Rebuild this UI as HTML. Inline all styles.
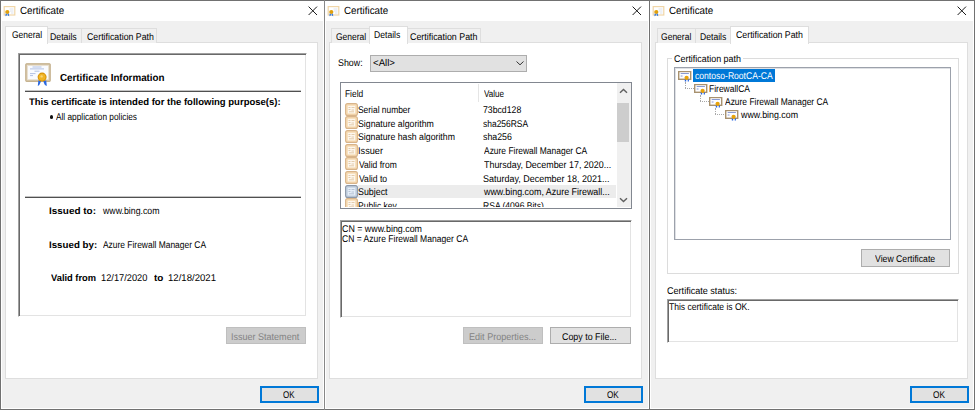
<!DOCTYPE html>
<html><head><meta charset="utf-8">
<style>
*{margin:0;padding:0;box-sizing:border-box}
html,body{width:975px;height:410px;overflow:hidden;background:#f0f0f0}
body{position:relative;font-family:"Liberation Sans",sans-serif;font-size:9.8px;color:#000;letter-spacing:-0.4px;text-rendering:geometricPrecision}
.a{position:absolute}
.t{position:absolute;white-space:nowrap;line-height:10px;z-index:5}
.b{font-weight:bold;letter-spacing:0;font-size:9.5px}
.dis{color:#838383}
.dlg{position:absolute;top:0;width:326px;height:410px;border:1px solid #717171;background:#f0f0f0}
.hl{position:absolute;left:0;top:0;width:324px;height:408px;border-left:1px solid #fff;border-right:1px solid #fff;border-bottom:1px solid #fff}
.title{position:absolute;left:0;top:0;width:324px;height:20px;background:#fff}
.x{position:absolute;left:306px;top:4px;width:11px;height:11px}
.ticon{position:absolute;left:2px;top:5px;width:14px;height:12px}
.tab{position:absolute;background:#f0f0f0;border:1px solid #dedede;border-bottom:none}
.tabsel{position:absolute;background:#fff;border:1px solid #dedede;border-bottom:none;z-index:2}
.panel{position:absolute;background:#fff;border:1px solid #dedede}
.btn{position:absolute;background:#e1e1e1;border:1px solid #adadad}
.btnd{position:absolute;background:#cccccc;border:1px solid #bfbfbf}
.ok{position:absolute;background:#e1e1e1;border:2px solid #0078d7}
.sunk{position:absolute;background:#fff;border-top:1px solid #a0a0a0;border-left:1px solid #a0a0a0;border-right:1px solid #fff;border-bottom:1px solid #fff;box-shadow:inset 1px 1px 0 #696969,inset -1px -1px 0 #e3e3e3}
.tv{position:absolute;background:#fff;border:1px solid #9ca1ab;box-shadow:inset 1px 1px 0 #dfe1e5}
.lv{position:absolute;background:#fff;border:1px solid #828790}
.grp{position:absolute;border:1px solid #dcdcdc}
</style></head><body>
<svg width="0" height="0" style="position:absolute">
<defs>
<g id="ticon">
  <rect x="1.2" y="0.6" width="10.6" height="8.4" fill="#fff" stroke="#f0d6a8" stroke-width="1.2"/>
  <path d="M6.5 3h4M7 5h3.5M8 7h2.5" stroke="#d5dbe6" stroke-width="0.8"/>
  <circle cx="4.3" cy="6" r="2.1" fill="#e0a00c"/>
  <path d="M2.6 7.6 L2.4 10.3 L3.9 9.6 L4.1 8.1Z M4.5 8.1 L4.7 9.6 L6.2 10.3 L6 7.6Z" fill="#3b7de0"/>
</g>
<g id="xicon">
  <path d="M1.6 1.6L10 10M10 1.6L1.6 10" stroke="#1a1a1a" stroke-width="1"/>
</g>
<g id="bigcert">
  <rect x="0.3" y="0.3" width="25.4" height="18.6" rx="1.2" fill="#d6c7aa"/>
  <rect x="0.8" y="0.8" width="24.4" height="17.6" rx="1" fill="none" stroke="#c2ae8a" stroke-width="0.9"/>
  <rect x="2.6" y="2.6" width="20.8" height="14" fill="#f9fbff" stroke="#ece3d3" stroke-width="0.7"/>
  <path d="M7.5 4h9M5 5.9h14M9.5 8.2h5M5 10.6h5.5M5 12.6h3" stroke="#9fb3dc" stroke-width="0.8"/>
  <path d="M13.4 17.3 L12.8 23 L14.3 22 L16.1 18.3Z M18.2 18.3 L19.9 22 L21.8 23 L21.2 17.3Z" fill="#2a68e0"/>
  <circle cx="17.1" cy="14.1" r="4.5" fill="#d9940a"/>
  <circle cx="17.1" cy="14.1" r="3.4" fill="#f0b526"/>
  <circle cx="16.6" cy="13.4" r="1.2" fill="#f8d57a"/>
</g>
<g id="fieldicon">
  <rect x="0.6" y="0.6" width="11.8" height="11.8" rx="2" fill="#f7dbb3" stroke="#d8b48a" stroke-width="1.1"/>
  <rect x="2.8" y="2.8" width="7.4" height="7.6" fill="#fdf7ee"/>
  <path d="M3.5 4.5h2M6.5 4.5h3M3.5 6.5h2M6.5 7h2.5M4 8.8h5" stroke="#dcc09a" stroke-width="0.8"/>
</g>
<g id="fieldicon2">
  <rect x="0.6" y="0.6" width="11.8" height="11.8" rx="2" fill="#c5d2e2" stroke="#8d98a8" stroke-width="1.1"/>
  <rect x="2.8" y="2.8" width="7.4" height="7.6" fill="#e6eef8"/>
  <path d="M3.5 4.5h2M6.5 4.5h3M3.5 6.5h2M6.5 7h2.5M4 8.8h5" stroke="#a9b8cc" stroke-width="0.8"/>
</g>
<g id="treecert">
  <rect x="0.7" y="0.5" width="12" height="7.8" fill="#fdfdff" stroke="#a8916e" stroke-width="1.4"/>
  <path d="M2.7 2.5h8.2M2.7 5h1.8" stroke="#6b82c8" stroke-width="0.8"/>
  <path d="M6.8 8.3 L6.8 10.6 L8.2 10.6 L8.2 8.6Z M9.7 8.6 L9.7 10.6 L10.9 10.6 L10.9 8.3Z" fill="#2563e0"/>
  <circle cx="8.6" cy="6.8" r="2.1" fill="#e8a30a"/>
</g>
</defs>
</svg>
<div class="dlg" style="left:0px;width:325px">
  <div class="hl" style="width:323px"></div>
  <div class="title" style="width:323px"></div>
  <svg class="ticon" viewBox="0 0 14 12"><use href="#ticon"/></svg>
  <svg class="x" viewBox="0 0 11 11"><use href="#xicon"/></svg>
</div>
<div class="t" style="left:19.67px;top:6.0px;font-size:10.5px;letter-spacing:0.000px;transform:scaleX(0.9348);transform-origin:0 0;">Certificate</div>
<div class="dlg" style="left:324px;width:326px">
  <div class="hl" style="width:324px"></div>
  <div class="title" style="width:324px"></div>
  <svg class="ticon" viewBox="0 0 14 12"><use href="#ticon"/></svg>
  <svg class="x" viewBox="0 0 11 11"><use href="#xicon"/></svg>
</div>
<div class="t" style="left:343.67px;top:6.0px;font-size:10.5px;letter-spacing:0.000px;transform:scaleX(0.9348);transform-origin:0 0;">Certificate</div>
<div class="dlg" style="left:649px;width:326px">
  <div class="hl" style="width:324px"></div>
  <div class="title" style="width:324px"></div>
  <svg class="ticon" viewBox="0 0 14 12"><use href="#ticon"/></svg>
  <svg class="x" viewBox="0 0 11 11"><use href="#xicon"/></svg>
</div>
<div class="t" style="left:668.67px;top:6.0px;font-size:10.5px;letter-spacing:0.000px;transform:scaleX(0.9348);transform-origin:0 0;">Certificate</div>
<div class="panel" style="left:5px;top:42px;width:313px;height:337px;"></div>
<div class="tabsel" style="left:5px;top:26px;width:43px;height:18px;"></div>
<div class="tab" style="left:47px;top:28px;width:35px;height:15px;"></div>
<div class="tab" style="left:81px;top:28px;width:76px;height:15px;"></div>
<div class="t" style="left:11.90px;top:31.1px;letter-spacing:0.000px;transform:scaleX(0.8618);transform-origin:0 0;">General</div>
<div class="t" style="left:50.11px;top:32.8px;letter-spacing:0.000px;transform:scaleX(0.8931);transform-origin:0 0;">Details</div>
<div class="t" style="left:86.60px;top:32.8px;letter-spacing:0.000px;transform:scaleX(0.8973);transform-origin:0 0;">Certification Path</div>
<div class="sunk" style="left:18px;top:53px;width:289px;height:264px;"></div>
<svg class="a" style="left:25px;top:63px;width:26px;height:24px;z-index:5" viewBox="0 0 26 24"><use href="#bigcert"/></svg>
<div class="t b" style="left:59.90px;top:73.8px;font-size:10.2px;letter-spacing:0.000px;transform:scaleX(0.9620);transform-origin:0 0;">Certificate Information</div>
<div class="a" style="left:25px;top:91px;width:276px;height:1px;background:#505050;box-shadow:0 -1px 0 #c4c4c4;z-index:5"></div>
<div class="t b" style="left:28.60px;top:98.4px;letter-spacing:0.000px;transform:scaleX(1.0016);transform-origin:0 0;">This certificate is intended for the following purpose(s):</div>
<div class="a" style="left:50.3px;top:115.4px;width:3.2px;height:3.2px;border-radius:50%;background:#111;z-index:5"></div>
<div class="t" style="left:56.40px;top:112.5px;letter-spacing:0.000px;transform:scaleX(0.8448);transform-origin:0 0;">All application policies</div>
<div class="a" style="left:25px;top:197px;width:276px;height:1px;background:#505050;box-shadow:0 -1px 0 #c4c4c4;z-index:5"></div>
<div class="t b" style="left:49.25px;top:207.1px;letter-spacing:0.000px;transform:scaleX(1.0465);transform-origin:0 0;">Issued to:</div>
<div class="t" style="left:103.30px;top:207.1px;letter-spacing:0.000px;transform:scaleX(0.8952);transform-origin:0 0;">www.bing.com</div>
<div class="t b" style="left:49.08px;top:240.9px;letter-spacing:0.000px;transform:scaleX(1.0244);transform-origin:0 0;">Issued by:</div>
<div class="t" style="left:103.30px;top:240.9px;letter-spacing:0.000px;transform:scaleX(0.8600);transform-origin:0 0;">Azure Firewall Manager CA</div>
<div class="t b" style="left:50.50px;top:274.4px;letter-spacing:0.000px;transform:scaleX(0.9804);transform-origin:0 0;">Valid from</div>
<div class="t" style="left:101.45px;top:274.4px;letter-spacing:0.000px;transform:scaleX(0.9458);transform-origin:0 0;">12/17/2020</div>
<div class="t b" style="left:153.60px;top:274.4px;letter-spacing:0.000px;transform:scaleX(1.0444);transform-origin:0 0;">to</div>
<div class="t" style="left:168.02px;top:274.4px;letter-spacing:0.000px;transform:scaleX(0.9787);transform-origin:0 0;">12/18/2021</div>
<div class="btnd" style="left:226px;top:327px;width:80px;height:17px;"></div>
<div class="t dis" style="left:230.88px;top:333.0px;letter-spacing:0.000px;transform:scaleX(0.9205);transform-origin:0 0;">Issuer Statement</div>
<div class="ok" style="left:260px;top:386px;width:59px;height:17px;"></div>
<div class="t" style="left:283.30px;top:390.6px;letter-spacing:0.000px;transform:scaleX(0.8143);transform-origin:0 0;">OK</div>
<div class="panel" style="left:329px;top:42px;width:313px;height:337px;"></div>
<div class="tab" style="left:331px;top:28px;width:39px;height:15px;"></div>
<div class="tabsel" style="left:369px;top:26px;width:39px;height:18px;"></div>
<div class="tab" style="left:407px;top:28px;width:74px;height:15px;"></div>
<div class="t" style="left:335.70px;top:32.8px;letter-spacing:0.000px;transform:scaleX(0.8676);transform-origin:0 0;">General</div>
<div class="t" style="left:374.12px;top:31.1px;letter-spacing:0.000px;transform:scaleX(0.8793);transform-origin:0 0;">Details</div>
<div class="t" style="left:410.30px;top:32.8px;letter-spacing:0.000px;transform:scaleX(0.9041);transform-origin:0 0;">Certification Path</div>
<div class="t" style="left:337.90px;top:59.4px;letter-spacing:0.000px;transform:scaleX(0.9038);transform-origin:0 0;">Show:</div>
<div class="btn" style="left:370px;top:55px;width:157px;height:17px;"></div>
<div class="t" style="left:372.91px;top:59.4px;letter-spacing:0.000px;transform:scaleX(0.9857);transform-origin:0 0;">&lt;All&gt;</div>
<svg class="a" style="left:515px;top:60px;width:10px;height:6px;z-index:5" viewBox="0 0 10 6"><path d="M1.5 1.5L5 4.8L8.5 1.5" fill="none" stroke="#333" stroke-width="1"/></svg>
<div class="lv" style="left:340px;top:82px;width:292px;height:127px;"></div>
<div class="a" style="left:617px;top:83px;width:14px;height:124px;background:#f0f0f0;z-index:4"></div>
<div class="a" style="left:617px;top:103px;width:12px;height:39px;background:#cdcdcd;z-index:5"></div>
<svg class="a" style="left:619px;top:88px;width:9px;height:6px;z-index:5" viewBox="0 0 9 6"><path d="M1 4.8L4.5 1.4L8 4.8" fill="none" stroke="#606060" stroke-width="1.4"/></svg>
<svg class="a" style="left:619px;top:197px;width:9px;height:6px;z-index:5" viewBox="0 0 9 6"><path d="M1 1.2L4.5 4.6L8 1.2" fill="none" stroke="#606060" stroke-width="1.4"/></svg>
<div class="t" style="left:345.44px;top:89.5px;letter-spacing:0.000px;transform:scaleX(0.8550);transform-origin:0 0;">Field</div>
<div class="t" style="left:483.90px;top:89.5px;letter-spacing:0.000px;transform:scaleX(0.8250);transform-origin:0 0;">Value</div>
<div class="a" style="left:478px;top:84px;width:1px;height:18px;background:#e5e5e5;z-index:5"></div>
<div class="a" style="left:341px;top:101px;width:276px;height:106px;overflow:hidden;z-index:5">
<svg class="a" style="left:4px;top:1.6px;width:13px;height:13px" viewBox="0 0 13 13"><use href="#fieldicon"/></svg>
<div class="t" style="left:17.04px;top:5.1px;letter-spacing:0.000px;transform:scaleX(0.8583);transform-origin:0 0;">Serial number</div>
<div class="t" style="left:141.71px;top:5.1px;letter-spacing:0.000px;transform:scaleX(0.8881);transform-origin:0 0;">73bcd128</div>
<svg class="a" style="left:4px;top:15.3px;width:13px;height:13px" viewBox="0 0 13 13"><use href="#fieldicon"/></svg>
<div class="t" style="left:17.01px;top:18.8px;letter-spacing:0.000px;transform:scaleX(0.8928);transform-origin:0 0;">Signature algorithm</div>
<div class="t" style="left:141.74px;top:18.8px;letter-spacing:0.000px;transform:scaleX(0.8627);transform-origin:0 0;">sha256RSA</div>
<svg class="a" style="left:4px;top:28.9px;width:13px;height:13px" viewBox="0 0 13 13"><use href="#fieldicon"/></svg>
<div class="t" style="left:17.01px;top:32.4px;letter-spacing:0.000px;transform:scaleX(0.8897);transform-origin:0 0;">Signature hash algorithm</div>
<div class="t" style="left:141.70px;top:32.4px;letter-spacing:0.000px;transform:scaleX(0.9000);transform-origin:0 0;">sha256</div>
<svg class="a" style="left:4px;top:42.6px;width:13px;height:13px" viewBox="0 0 13 13"><use href="#fieldicon"/></svg>
<div class="t" style="left:16.96px;top:46.1px;letter-spacing:0.000px;transform:scaleX(0.9360);transform-origin:0 0;">Issuer</div>
<div class="t" style="left:142.60px;top:46.1px;letter-spacing:0.000px;transform:scaleX(0.8617);transform-origin:0 0;">Azure Firewall Manager CA</div>
<svg class="a" style="left:4px;top:56.3px;width:13px;height:13px" viewBox="0 0 13 13"><use href="#fieldicon"/></svg>
<div class="t" style="left:17.90px;top:59.8px;letter-spacing:0.000px;transform:scaleX(0.8698);transform-origin:0 0;">Valid from</div>
<div class="t" style="left:142.60px;top:59.8px;letter-spacing:0.000px;transform:scaleX(0.9094);transform-origin:0 0;">Thursday, December 17, 2020...</div>
<svg class="a" style="left:4px;top:70.0px;width:13px;height:13px" viewBox="0 0 13 13"><use href="#fieldicon"/></svg>
<div class="t" style="left:17.90px;top:73.5px;letter-spacing:0.000px;transform:scaleX(0.8781);transform-origin:0 0;">Valid to</div>
<div class="t" style="left:141.68px;top:73.5px;letter-spacing:0.000px;transform:scaleX(0.9153);transform-origin:0 0;">Saturday, December 18, 2021...</div>
<div class="a" style="left:17px;top:84px;width:258px;height:13px;background:#ececec"></div>
<svg class="a" style="left:4px;top:83.6px;width:13px;height:13px" viewBox="0 0 13 13"><use href="#fieldicon2"/></svg>
<div class="t" style="left:17.00px;top:87.1px;letter-spacing:0.000px;transform:scaleX(0.9031);transform-origin:0 0;">Subject</div>
<div class="t" style="left:142.60px;top:87.1px;letter-spacing:0.000px;transform:scaleX(0.9087);transform-origin:0 0;">www.bing.com, Azure Firewall...</div>
<svg class="a" style="left:4px;top:97.3px;width:13px;height:13px" viewBox="0 0 13 13"><use href="#fieldicon"/></svg>
<div class="t" style="left:17.03px;top:100.8px;letter-spacing:0.000px;transform:scaleX(0.8698);transform-origin:0 0;">Public key</div>
<div class="t" style="left:141.73px;top:100.8px;letter-spacing:0.000px;transform:scaleX(0.8735);transform-origin:0 0;">RSA (4096 Bits)</div>
</div>
<div class="sunk" style="left:340px;top:220px;width:292px;height:98px;"></div>
<div class="t" style="left:342.00px;top:224.7px;letter-spacing:0.000px;transform:scaleX(0.9034);transform-origin:0 0;">CN = www.bing.com</div>
<div class="t" style="left:342.00px;top:235.1px;letter-spacing:0.000px;transform:scaleX(0.8722);transform-origin:0 0;">CN = Azure Firewall Manager CA</div>
<div class="btnd" style="left:463px;top:327px;width:80px;height:17px;"></div>
<div class="t dis" style="left:468.67px;top:333.0px;letter-spacing:0.000px;transform:scaleX(0.9254);transform-origin:0 0;">Edit Properties...</div>
<div class="btn" style="left:550px;top:327px;width:81px;height:17px;"></div>
<div class="t" style="left:562.40px;top:333.0px;letter-spacing:0.000px;transform:scaleX(0.9067);transform-origin:0 0;">Copy to File...</div>
<div class="ok" style="left:584px;top:386px;width:59px;height:17px;"></div>
<div class="t" style="left:607.20px;top:390.6px;letter-spacing:0.000px;transform:scaleX(0.8286);transform-origin:0 0;">OK</div>
<div class="panel" style="left:655px;top:42px;width:313px;height:337px;"></div>
<div class="tab" style="left:657px;top:28px;width:39px;height:15px;"></div>
<div class="tab" style="left:695px;top:28px;width:36px;height:15px;"></div>
<div class="tabsel" style="left:730px;top:26px;width:79px;height:18px;"></div>
<div class="t" style="left:661.00px;top:32.8px;letter-spacing:0.000px;transform:scaleX(0.8706);transform-origin:0 0;">General</div>
<div class="t" style="left:699.52px;top:32.8px;letter-spacing:0.000px;transform:scaleX(0.8793);transform-origin:0 0;">Details</div>
<div class="t" style="left:736.20px;top:31.1px;letter-spacing:0.000px;transform:scaleX(0.8973);transform-origin:0 0;">Certification Path</div>
<div class="grp" style="left:667px;top:58px;width:292px;height:216px;"></div>
<div class="a" style="left:672px;top:55px;width:71px;height:6px;background:#fff;z-index:1"></div>
<div class="t" style="left:674.10px;top:55.1px;letter-spacing:0.000px;transform:scaleX(0.9110);transform-origin:0 0;">Certification path</div>
<div class="tv" style="left:674px;top:67px;width:277px;height:173px;z-index:2;"></div>
<div class="a" style="left:693px;top:69px;width:82px;height:13px;background:#0078d7;z-index:3"></div>
<svg class="a" style="left:678px;top:71px;width:14px;height:12px;z-index:5" viewBox="0 0 14 12"><use href="#treecert"/></svg>
<div class="t" style="left:695.10px;top:72.0px;color:#fff;letter-spacing:0.000px;transform:scaleX(0.8753);transform-origin:0 0;">contoso-RootCA-CA</div>
<svg class="a" style="left:694px;top:84px;width:14px;height:12px;z-index:5" viewBox="0 0 14 12"><use href="#treecert"/></svg>
<div class="t" style="left:708.93px;top:85.2px;letter-spacing:0.000px;transform:scaleX(0.8652);transform-origin:0 0;">FirewallCA</div>
<svg class="a" style="left:709px;top:97px;width:14px;height:12px;z-index:5" viewBox="0 0 14 12"><use href="#treecert"/></svg>
<div class="t" style="left:725.40px;top:97.7px;letter-spacing:0.000px;transform:scaleX(0.8617);transform-origin:0 0;">Azure Firewall Manager CA</div>
<svg class="a" style="left:724.5px;top:110px;width:14px;height:12px;z-index:5" viewBox="0 0 14 12"><use href="#treecert"/></svg>
<div class="t" style="left:740.80px;top:110.8px;letter-spacing:0.000px;transform:scaleX(0.9032);transform-origin:0 0;">www.bing.com</div>
<div class="a" style="left:685px;top:82px;width:1px;height:6px;border-left:1px dotted #a8a8a8;z-index:4"></div>
<div class="a" style="left:685px;top:88px;width:9px;height:1px;border-top:1px dotted #a8a8a8;z-index:4"></div>
<div class="a" style="left:700px;top:95px;width:1px;height:6px;border-left:1px dotted #a8a8a8;z-index:4"></div>
<div class="a" style="left:700px;top:101px;width:9px;height:1px;border-top:1px dotted #a8a8a8;z-index:4"></div>
<div class="a" style="left:715px;top:108px;width:1px;height:6px;border-left:1px dotted #a8a8a8;z-index:4"></div>
<div class="a" style="left:715px;top:114px;width:9px;height:1px;border-top:1px dotted #a8a8a8;z-index:4"></div>
<div class="btn" style="left:861px;top:249px;width:89px;height:18px;"></div>
<div class="t" style="left:874.70px;top:254.9px;letter-spacing:0.000px;transform:scaleX(0.8868);transform-origin:0 0;">View Certificate</div>
<div class="t" style="left:667.00px;top:286.7px;letter-spacing:0.000px;transform:scaleX(0.9253);transform-origin:0 0;">Certificate status:</div>
<div class="sunk" style="left:667px;top:299px;width:292px;height:44px;"></div>
<div class="t" style="left:669.00px;top:303.4px;letter-spacing:0.000px;transform:scaleX(0.8717);transform-origin:0 0;">This certificate is OK.</div>
<div class="ok" style="left:910px;top:386px;width:59px;height:17px;"></div>
<div class="t" style="left:932.70px;top:390.6px;letter-spacing:0.000px;transform:scaleX(0.8429);transform-origin:0 0;">OK</div>
<div class="a" style="left:324px;top:0;width:1px;height:410px;background:#888;z-index:20"></div>
</body></html>
